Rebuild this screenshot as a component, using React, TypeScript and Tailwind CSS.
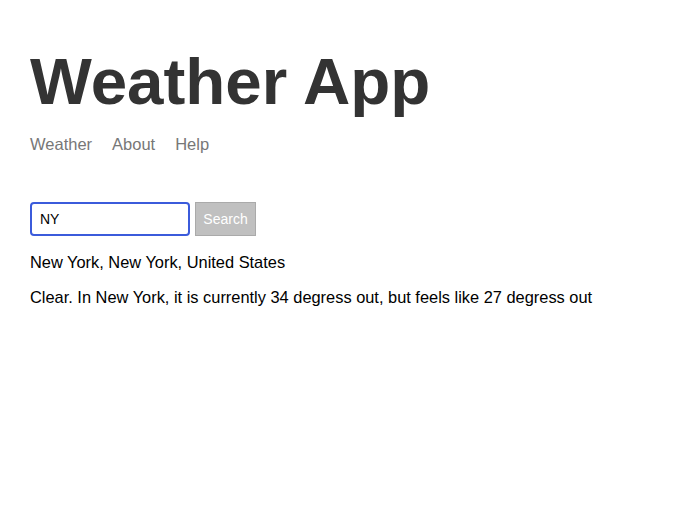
import React, { useState } from 'react';

export default function App() {
  const [query, setQuery] = useState('NY');

  return (
    <div className="min-h-screen bg-white px-[30px] pt-[44px] text-black" style={{ fontFamily: '"Liberation Sans", Arial, sans-serif' }}>
      <h1 className="text-[65.5px] font-bold leading-[76px] text-[#333333]">Weather App</h1>
      <nav className="mt-[14px] flex gap-[20px] text-[16.5px] leading-[20px] text-[#777777]">
        <a href="#">Weather</a>
        <a href="#">About</a>
        <a href="#">Help</a>
      </nav>
      <form className="mt-[48px] flex gap-[5px]" onSubmit={e => e.preventDefault()}>
        <input
          type="text"
          value={query}
          onChange={e => setQuery(e.target.value)}
          className="h-[34px] w-[160px] rounded-[4px] border-2 border-[#3b5bdb] px-[8px] text-[14px] text-black outline-none"
        />
        <button type="submit" className="h-[34px] w-[61px] border border-[#aaaaaa] bg-[#c0c0c0] text-[14px] text-white">
          Search
        </button>
      </form>
      <p className="mt-[16px] text-[16.4px] leading-[20px]">New York, New York, United States</p>
      <p className="mt-[15px] text-[16.4px] leading-[20px]">Clear. In New York, it is currently 34 degress out, but feels like 27 degress out</p>
    </div>
  );
}
